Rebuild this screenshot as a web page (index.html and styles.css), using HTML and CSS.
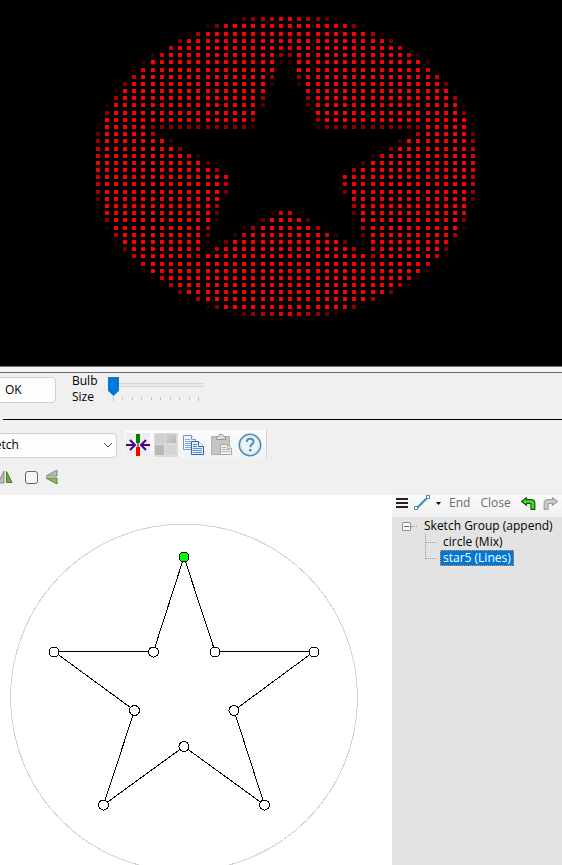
FILE: index.html
```html
<!DOCTYPE html>
<html lang="en">
<head>
<meta charset="utf-8">
<title>Sketch Effect</title>
<link rel="stylesheet" href="styles.css">
</head>
<body>
<main class="app">
  <section class="preview" aria-label="Model preview">
    <svg class="preview-view" id="bulbs" viewBox="0 0 562 366" shape-rendering="crispEdges"></svg>
  </section>
  <div class="sash"></div>

  <section class="settings">
    <div class="preview-controls">
      <button class="ok-button" type="button">OK</button>
      <label class="bulb-label" for="bulb-size">Bulb<br>Size</label>
      <div class="slider">
        <input id="bulb-size" class="slider-input" type="range" min="1" max="10" value="1">
        <div class="ticks"><i></i><i></i><i></i><i></i><i></i><i></i><i></i><i></i><i></i><i></i></div>
      </div>
    </div>
    <hr class="divider">
    <div class="buffer-row">
      <div class="combo">
        <select class="combo-select" aria-label="Scaling"><option>Stretch</option></select>
        <svg class="combo-arrow" viewBox="0 0 10 6"><path d="M1 1l4 4 4-4" fill="none" stroke="#555"/></svg>
      </div>
      <div class="toolbar">
        <button class="tool" type="button" aria-label="Center">
          <svg viewBox="0 0 24 24"><path fill="#eee" d="M0 0h24v24H0z"/><path fill="#008000" d="M10 1h4v9h-4z"/><path fill="red" d="M10 14h4v9h-4z"/><path fill="#789" d="M11 10h2v4h-2z"/><path d="M0 12h9M4 7l5 5-5 5M24 12h-9M20 7l-5 5 5 5" fill="none" stroke="#4b0082" stroke-width="2"/></svg>
        </button>
        <button class="tool" type="button" aria-label="Checkerboard">
          <svg viewBox="0 0 24 24"><defs><linearGradient id="g" x2="1" y2="1"><stop stop-color="#d2d2d2"/><stop offset="1" stop-color="#b8b8b8"/></linearGradient></defs><path fill="#dcdcdc" d="M0 0h24v24H0z"/><path fill="#d0d0d0" d="M1 1h10v10H1z"/><path fill="url(#g)" d="M12 1h10v9H12z"/><path fill="#b9b9b9" d="M1 12h9v10H1z"/><path fill="#d5d5d5" d="M12 12h10v10H12z"/></svg>
        </button>
        <button class="tool" type="button" aria-label="Copy">
          <svg viewBox="0 0 24 24"><path d="M1.500 2.500h8l4 4v10h-12z" fill="#edf4fc" stroke="#7c96b8"/><path d="M9.500 2.500v4h4" fill="#fff" stroke="#7c96b8"/><path d="M3 6.500h5M3 8.500h7M3 10.500h7M3 12.500h7M3 14.500h7" stroke="#7fa9dc"/><path d="M9.500 8.500h7l5 5v8h-12z" fill="#e4effc" stroke="#3c61a8"/><path d="M16.500 8.500v5h5" fill="#fff" stroke="#3c61a8"/><path d="M11 11.500h4M11 13.500h4M11 15.500h9M11 17.500h9M11 19.500h9" stroke="#5b91da"/></svg>
        </button>
        <button class="tool" type="button" aria-label="Paste">
          <svg viewBox="0 0 24 24"><path d="M1.500 3.500h18v18h-18z" fill="#c5c5c5" stroke="#b2b2b2"/><path d="M6.500 6.500v-3h2l1-2h3l1 2h2v3z" fill="#ddd" stroke="#999"/><path d="M10.500 11.500h7l4 4v6h-11z" fill="#eee" stroke="#a9a9a9"/><path d="M17.500 11.500v4h4M12 14.500h4M12 16.500h8M12 18.500h8" fill="none" stroke="#b5b5b5"/></svg>
        </button>
        <button class="tool" type="button" aria-label="Help">
          <svg viewBox="0 0 24 24"><circle cx="12" cy="12" r="10.700" fill="#edf4f8" stroke="#4a8ab2" stroke-width="1.500"/><circle cx="12" cy="12" r="9.200" fill="none" stroke="#cde0eb"/><path d="M8.800 9c0-2.200 1.500-3.200 3.400-3.200s3.300 1.200 3.300 2.900c0 2.400-3.300 2.800-3.300 5.500" fill="none" stroke="#568fb5" stroke-width="2"/><path fill="#568fb5" d="M11 16h2.400v2.400H11z"/></svg>
        </button>
      </div>
    </div>
    <div class="flip-row">
      <svg class="flip-h" viewBox="0 0 13 14"><path d="M4 1v12H-2z" fill="#bbb" stroke="#888"/><path d="M6.500 1.500v11h5.500z" fill="#78a63c" stroke="#4d7a25"/></svg>
      <input class="flip-check" type="checkbox" aria-label="Flip vertical">
      <svg class="flip-v" viewBox="0 0 13 16"><path d="M12 1v6H1z" fill="#bbb" stroke="#888"/><path d="M1 9h11v6z" fill="#8fb85a" stroke="#5b8a30"/></svg>
    </div>
  </section>

  <section class="workspace">
    <div class="canvas">
      <svg class="sketch" viewBox="0 0 392 370" shape-rendering="crispEdges">
        <circle cx="184" cy="202.500" r="173.500" fill="none" stroke="#d3d3d3"/>
        <path d="M184 62L215 156.500H314L234 215.500 264.500 310 184 251.500 103.500 310 134.500 215.500 54 156.500H153.500z" fill="none" stroke="#000"/>
        <g class="nodes">
          <circle class="selected-node" cx="184" cy="62" r="5"/><circle cx="215" cy="157" r="5"/><circle cx="314" cy="157" r="5"/><circle cx="234" cy="215.500" r="5"/><circle cx="264.500" cy="310" r="5"/><circle cx="184" cy="251.500" r="5"/><circle cx="103.500" cy="310" r="5"/><circle cx="134.500" cy="215.500" r="5"/><circle cx="54" cy="157" r="5"/><circle cx="153.500" cy="157" r="5"/>
        </g>
      </svg>
    </div>
    <aside class="side">
      <div class="path-bar">
        <button class="bar-button" type="button" aria-label="Menu"><svg class="menu-icon" viewBox="0 0 12 10"><path d="M0 1h12M0 5h12M0 9h12" stroke="#222" stroke-width="2"/></svg></button>
        <button class="bar-button line-button" type="button" aria-label="Line"><svg class="line-icon" viewBox="0 0 16 16"><path d="M3 13L13 3" stroke="#3a8bc0" stroke-width="2"/><path d="M.5 11.500h3v3h-3zM12.500 .5h3v3h-3z" fill="#fff" stroke="#3a8bc0"/></svg><svg class="drop-icon" viewBox="0 0 5 3"><path d="M0 0h5L2.500 3z"/></svg></button>
        <button class="bar-button text-button" type="button">End</button>
        <button class="bar-button text-button" type="button">Close</button>
        <button class="bar-button undo" type="button" aria-label="Undo"><svg class="arrow-icon" viewBox="0 0 15 13"><path d="M.7 4.500L5.500.7v2H10c2.500 0 3.800 1.300 3.800 3.600v6H10V7.500c0-.8-.3-1.200-1.200-1.200H5.500v2z" fill="#3fe01d" stroke="#17560f" stroke-width="1.200"/></svg></button>
        <button class="bar-button redo" type="button" aria-label="Redo"><svg class="arrow-icon" viewBox="0 0 15 13"><path d="M14.300 4.500L9.500.7v2H5c-2.500 0-3.800 1.300-3.800 3.600v6H5V7.500c0-.8.300-1.200 1.200-1.200h3.300v2z" fill="#cdcdcd" stroke="#a0a0a0" stroke-width="1.200"/></svg></button>
      </div>
      <ul class="tree">
        <li>
          <div class="tree-root"><span class="toggle"></span><span class="stub"></span><span class="node-text">Sketch Group (append)</span></div>
          <ul class="branch">
            <li class="leaf"><span class="node-text">circle (Mix)</span></li>
            <li class="leaf"><span class="node-text selected">star5 (Lines)</span></li>
          </ul>
        </li>
      </ul>
    </aside>
  </section>
</main>
<script src="bulbs.js"></script>
</body>
</html>
```
FILE: styles.css
```css
* { box-sizing: border-box; }
body {
  margin: 0;
  background: #f0f0f0;
  color: #000;
  font: 12px/16px "Open Sans", "Noto Sans", sans-serif;
}
button, select { font: inherit; color: inherit; }
svg { display: block; }
.app { display: flex; flex-direction: column; min-height: 100vh; overflow: hidden; }

.preview { background: #000; }
.preview-view { width: 100%; height: 366px; }
.sash { height: 7px; border-top: 1px solid #777; border-bottom: 1px solid #666; background: #f3f3f3; }

.preview-controls { display: flex; align-items: flex-start; padding-top: 4px; height: 46px; }
.ok-button {
  width: 66px; height: 26px; margin-left: -10px; padding: 0 0 0 14px;
  text-align: left; background: #fdfdfd; border: 1px solid #d0d0d0; border-radius: 4px;
}
.bulb-label { margin: -4px 0 0 16px; width: 36px; line-height: 16px; }
.slider { width: 96px; }
.slider-input { appearance: none; display: block; width: 100%; height: 19px; margin: 0; background: none; }
.slider-input::-webkit-slider-runnable-track {
  height: 19px;
  background: linear-gradient(#e7eaea, #e7eaea) 0 7px / 100% 2px no-repeat, linear-gradient(#d6d6d6, #d6d6d6) 0 6px / 100% 4px no-repeat;
}
.slider-input::-webkit-slider-thumb {
  appearance: none; width: 11px; height: 19px;
  background: #0078d7; clip-path: polygon(0 0, 100% 0, 100% 72%, 50% 100%, 0 72%);
}
.ticks { display: flex; justify-content: space-between; padding: 1px 5px 0; }
.ticks i { width: 1px; height: 3px; background: #c4c4c4; }
.ticks i:first-child, .ticks i:last-child { height: 4px; }
.divider { margin: 0 0 0 3px; border: 0; border-top: 1px solid #000; }

.buffer-row { display: flex; align-items: flex-start; padding-top: 10px; }
.combo { position: relative; width: 157px; height: 25px; margin: 3px 8px 0 -40px; }
.combo-select {
  appearance: none; width: 100%; height: 100%; padding: 0 18px 2px;
  background: #fdfdfd; border: 1px solid #d0d0d0; border-radius: 4px;
}
.combo-arrow { position: absolute; right: 4px; top: 9px; width: 10px; height: 6px; pointer-events: none; }
.toolbar {
  display: flex; gap: 4px; height: 29px; padding: 3px 4px 2px 1px;
  background: linear-gradient(#fcfcfc, #f2f2f2); border-right: 1px solid #d4d4d4; border-radius: 2px;
}
.tool { width: 24px; height: 24px; padding: 0; border: 0; background: none; }
.tool svg { width: 24px; height: 24px; }
.flip-row { display: flex; align-items: center; height: 36px; }
.flip-h { width: 13px; height: 14px; }
.flip-check {
  appearance: none; width: 13px; height: 13px; margin: 0 7px 0 12px;
  background: #f7f7f7; border: 1px solid #666; border-radius: 3px;
}
.flip-v { width: 13px; height: 16px; }

.workspace { display: flex; flex: 1; }
.canvas { flex: 1; background: #fff; }
.sketch { width: 100%; height: 370px; }
.nodes { fill: #fff; stroke: #000; }
.selected-node { fill: #0f0; }

.side { width: 170px; background: #e3e3e3; }
.path-bar { display: flex; align-items: center; height: 22px; padding: 0 4px 6px; background: linear-gradient(#fafafa, #f1f1f1); color: #6b6b6b; }
.bar-button { flex: none; padding: 0; border: 0; background: none; line-height: 16px; }
.menu-icon { width: 12px; height: 10px; }
.line-button { display: flex; align-items: center; gap: 6px; margin: 0 8px 0 6px; }
.line-icon { width: 16px; height: 16px; }
.drop-icon { width: 5px; height: 3px; }
.text-button { margin-right: 10px; }
.arrow-icon { width: 15px; height: 13px; }
.redo { margin-left: 7px; }

.tree, .branch { list-style: none; margin: 0; padding: 0; }
.tree { padding: 1px 0 0 10px; }
.tree-root { display: flex; align-items: center; height: 16px; }
.toggle { width: 9px; height: 9px; border: 1px solid #919191; border-radius: 1px; background: linear-gradient(#4b63a7, #4b63a7) center / 5px 1px no-repeat #f8f8f8; }
.stub { width: 6px; border-top: 1px dotted #999; }
.node-text { margin-left: 4px; padding: 0 3px; line-height: 16px; white-space: nowrap; }
.branch { padding-left: 23px; }
.leaf { display: flex; height: 16px; }
.leaf::before { content: ""; width: 11px; height: 8px; border-left: 1px dotted #999; border-bottom: 1px dotted #999; }
.leaf:not(:last-child) { background: repeating-linear-gradient(#999 0 1px, transparent 1px 2px) left top / 1px 100% no-repeat; }
.leaf .node-text { margin-left: 3px; }
.selected { background: #0078d7; color: #fff; outline: 1px dotted #ff8728; outline-offset: -1px; }
```
FILE: bulbs.js
```js
// Left half of each bulb row, as runs of a first column and either
// hex brightness levels or the last column of a fully lit stretch.
const rows = [
  [[15, "269bce"]],
  [[12, "28e"], [15, 20]],
  [[10, "2a"], [12, 20]],
  [[9, "7"], [10, 20]],
  [[7, "1c"], [9, 19], [20, "e"]],
  [[6, "3d"], [8, 19], [20, "9"]],
  [[5, "3"], [6, 19], [20, "3"]],
  [[4, "1d"], [6, 19]],
  [[4, "c"], [5, 18], [19, "9"]],
  [[3, "7"], [4, 18], [19, "3"]],
  [[2, "2"], [3, 17], [18, "e"]],
  [[2, "a"], [3, 17], [18, "9"]],
  [[1, "2"], [2, 17], [18, "5"]],
  [[1, "8"], [2, 17]],
  [[1, 16], [17, "9"]],
  [[0, "2"], [1, 5], [6, "888888888883"]],
  [[0, "6"], [1, 5], [6, "b1"]],
  [[0, "9"], [1, 7], [8, "4"]],
  [[0, "c"], [1, 8], [9, "8"]],
  [[0, "d"], [1, 9], [10, "d3"]],
  [[0, "e"], [1, 11], [12, "5"]],
  [[0, "e"], [1, 12], [13, "a1"]],
  [[0, "c"], [1, 13], [14, "e"]],
  [[0, "c"], [1, 13], [14, "c"]],
  [[0, "9"], [1, 13], [14, "7"]],
  [[0, "6"], [1, 13], [14, "1"]],
  [[0, "2"], [1, 12], [13, "b"]],
  [[1, "e"], [2, 12], [13, "6"], [19, "2d"]],
  [[1, "8"], [2, 12], [13, "1"], [18, "6ff"]],
  [[1, "2"], [2, 11], [12, "b"], [16, "1a"], [18, 20]],
  [[2, "a"], [3, 11], [12, "6"], [15, "3d"], [17, 20]],
  [[2, "2"], [3, 11], [12, "2"], [14, "7"], [15, 20]],
  [[3, "7"], [4, 10], [11, "d1b"], [14, 20]],
  [[3, "1c"], [5, 10], [11, "b"], [12, 20]],
  [[4, "1d"], [6, 20]],
  [[5, "2"], [6, 20]],
  [[6, "2d"], [8, 20]],
  [[7, "1b"], [9, 20]],
  [[9, "7"], [10, 20]],
  [[10, "1a"], [12, 20]],
  [[12, "28e"], [15, 20]],
  [[15, "269bce"]]
];

const view = document.getElementById("bulbs");
const columns = 42;

function bulb(column, row, level) {
  const rect = document.createElementNS("http://www.w3.org/2000/svg", "rect");
  rect.setAttribute("x", 96 + Math.floor(column * 55 / 6));
  rect.setAttribute("y", 17 + 7 * row + [2, 7, 13, 18, 24, 29, 34, 40].filter(n => row >= n).length);
  rect.setAttribute("width", 4);
  rect.setAttribute("height", 4);
  rect.setAttribute("fill", `rgb(${level * 17},0,0)`);
  view.append(rect);
}

rows.forEach((runs, row) => {
  for (const [start, run] of runs) {
    const levels = typeof run === "number" ? "f".repeat(run - start + 1) : run;
    [...levels].forEach((digit, offset) => {
      const level = parseInt(digit, 16);
      bulb(start + offset, row, level);
      bulb(columns - 1 - start - offset, row, level);
    });
  }
});
```
